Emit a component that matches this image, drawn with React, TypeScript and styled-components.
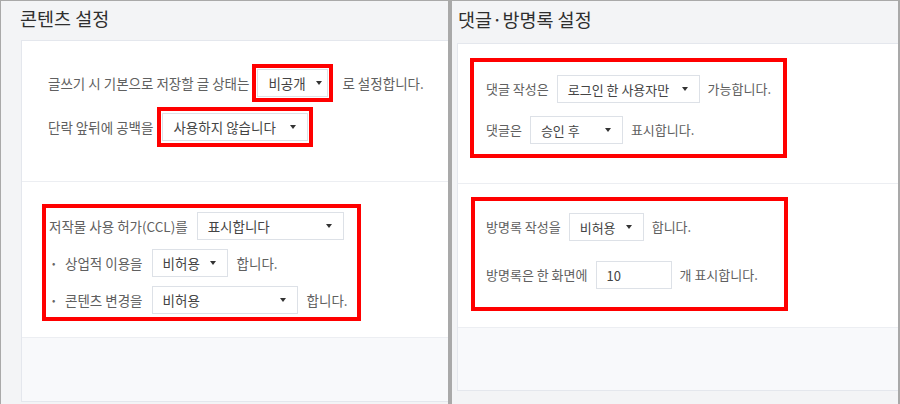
import React from 'react';
import styled, { createGlobalStyle } from 'styled-components';

const GlobalStyle = createGlobalStyle`
    html, body {
        margin: 0;
        padding: 0;
        background: #ffffff;
    }
    body {
        font-family: 'Noto Sans CJK KR', 'Noto Sans', sans-serif;
        -webkit-font-smoothing: antialiased;
    }
`;

const Page = styled.div`
    display: flex;
    width: 900px;
    height: 404px;
    overflow: hidden;
`;

const Panel = styled.div<{ $side: 'left' | 'right' }>`
    display: flex;
    flex-direction: column;
    box-sizing: border-box;
    width: 448px;
    height: 404px;
    background: #f3f4f6;
    border-top: 1px solid #a9a9a9;
    border-left: ${p => (p.$side === 'left' ? '1px solid #a9a9a9' : 'none')};
    border-right: ${p => (p.$side === 'right' ? '2px solid #a9a9a9' : 'none')};
    font-size: ${p => (p.$side === 'left' ? '13.5px' : '13px')};
    overflow: hidden;
`;

const Divider = styled.div`
    width: 4px;
    height: 404px;
    background: #a9a9a9;
    flex-shrink: 0;
`;

const PanelTitle = styled.h2<{ $height: number; $indent: number }>`
    margin: 0;
    box-sizing: border-box;
    height: ${p => p.$height}px;
    line-height: ${p => p.$height - 5}px;
    padding-left: ${p => p.$indent}px;
    font-size: 18.5px;
    font-weight: 400;
    color: #2e2e2e;
    flex-shrink: 0;
`;

const Card = styled.div<{ $indent: number }>`
    display: flex;
    flex-direction: column;
    margin-left: ${p => p.$indent}px;
    border: 1px solid #e4e7ed;
    border-right: none;
    background: #ffffff;
`;

const Section = styled.div<{ $height: number; $top: number; $left: number }>`
    box-sizing: border-box;
    height: ${p => p.$height}px;
    padding: ${p => p.$top}px 0 0 ${p => p.$left}px;
    border-bottom: 1px solid #eceef2;
`;

const CardFooter = styled.div<{ $height: number }>`
    height: ${p => p.$height}px;
    background: #f8f9fb;
`;

const Rows = styled.div<{ $gap: number }>`
    display: flex;
    flex-direction: column;
    gap: ${p => p.$gap}px;
`;

const Row = styled.div<{ $gap?: number }>`
    display: flex;
    align-items: center;
    gap: ${p => p.$gap ?? 8}px;
    color: #606060;
    white-space: nowrap;
`;

const Label = styled.span`
    line-height: 28px;
`;

const BulletLabel = styled.span`
    display: flex;
    align-items: center;
    line-height: 28px;

    &::before {
        content: '•';
        width: 13px;
        padding-left: 3px;
        font-size: 10px;
        color: #666666;
    }
`;

const Highlight = styled.div<{ $pad: string; $width?: number; $after?: number }>`
    box-sizing: border-box;
    width: ${p => (p.$width ? `${p.$width}px` : 'auto')};
    padding: ${p => p.$pad};
    margin-right: ${p => p.$after ?? 0}px;
    border: 4px solid #ff0000;
`;

const SelectBox = styled.div<{ $width: number; $caretPad: number }>`
    display: flex;
    align-items: center;
    justify-content: space-between;
    box-sizing: border-box;
    width: ${p => p.$width}px;
    height: 28px;
    padding: 0 ${p => p.$caretPad}px 0 10px;
    border: 1px solid #dde1e7;
    background: #ffffff;
    color: #444444;
`;

const Caret = styled.span`
    width: 0;
    height: 0;
    border-left: 3.5px solid transparent;
    border-right: 3.5px solid transparent;
    border-top: 4px solid #333333;
`;

const NumberInput = styled.div<{ $width: number }>`
    display: flex;
    align-items: center;
    box-sizing: border-box;
    width: ${p => p.$width}px;
    height: 28px;
    padding-left: 10px;
    border: 1px solid #dde1e7;
    background: #ffffff;
    color: #444444;
`;

type SelectProps = { value: string; width: number; caretPad?: number };

const Select = ({ value, width, caretPad = 11 }: SelectProps) => (
    <SelectBox $width={width} $caretPad={caretPad}>
        <span>{value}</span>
        <Caret />
    </SelectBox>
);

const App = () => (
    <>
        <GlobalStyle />
        <Page>
            <Panel $side="left">
                <PanelTitle $height={39} $indent={19}>
                    콘텐츠 설정
                </PanelTitle>
                <Card $indent={20}>
                    <Section $height={141} $top={23} $left={26}>
                        <Rows $gap={5}>
                            <Row $gap={3}>
                                <Label>글쓰기 시 기본으로 저장할 글 상태는</Label>
                                <Highlight $pad="1px" $after={6}>
                                    <Select value="비공개" width={71} caretPad={5} />
                                </Highlight>
                                <Label>로 설정합니다.</Label>
                            </Row>
                            <Row $gap={4}>
                                <Label>단락 앞뒤에 공백을</Label>
                                <Highlight $pad="2px 1px">
                                    <Select value="사용하지 않습니다" width={146} />
                                </Highlight>
                            </Row>
                        </Rows>
                    </Section>
                    <Section $height={156} $top={22} $left={20}>
                        <Highlight $pad="4px 0 3px 3px" $width={319}>
                            <Rows $gap={9}>
                                <Row $gap={9}>
                                    <Label>저작물 사용 허가(CCL)를</Label>
                                    <Select value="표시합니다" width={147} />
                                </Row>
                                <Row $gap={9}>
                                    <BulletLabel>상업적 이용을</BulletLabel>
                                    <Select value="비허용" width={76} />
                                    <Label>합니다.</Label>
                                </Row>
                                <Row $gap={9}>
                                    <BulletLabel>콘텐츠 변경을</BulletLabel>
                                    <Select value="비허용" width={146} />
                                    <Label>합니다.</Label>
                                </Row>
                            </Rows>
                        </Highlight>
                    </Section>
                    <CardFooter $height={63} />
                </Card>
            </Panel>
            <Divider />
            <Panel $side="right">
                <PanelTitle $height={42} $indent={6}>
                    댓글·방명록 설정
                </PanelTitle>
                <Card $indent={5}>
                    <Section $height={140} $top={14} $left={12}>
                        <Highlight $pad="13px 12px 10px 12px" $width={317}>
                            <Rows $gap={13}>
                                <Row>
                                    <Label>댓글 작성은</Label>
                                    <Select value="로그인 한 사용자만" width={144} />
                                    <Label>가능합니다.</Label>
                                </Row>
                                <Row>
                                    <Label>댓글은</Label>
                                    <Select value="승인 후" width={93} />
                                    <Label>표시합니다.</Label>
                                </Row>
                            </Rows>
                        </Highlight>
                    </Section>
                    <Section $height={144} $top={13} $left={13}>
                        <Highlight $pad="12px 12px 18px 11px" $width={317}>
                            <Rows $gap={20}>
                                <Row>
                                    <Label>방명록 작성을</Label>
                                    <Select value="비허용" width={75} />
                                    <Label>합니다.</Label>
                                </Row>
                                <Row>
                                    <Label>방명록은 한 화면에</Label>
                                    <NumberInput $width={76}>10</NumberInput>
                                    <Label>개 표시합니다.</Label>
                                </Row>
                            </Rows>
                        </Highlight>
                    </Section>
                    <CardFooter $height={62} />
                </Card>
            </Panel>
        </Page>
    </>
);

export default App;
